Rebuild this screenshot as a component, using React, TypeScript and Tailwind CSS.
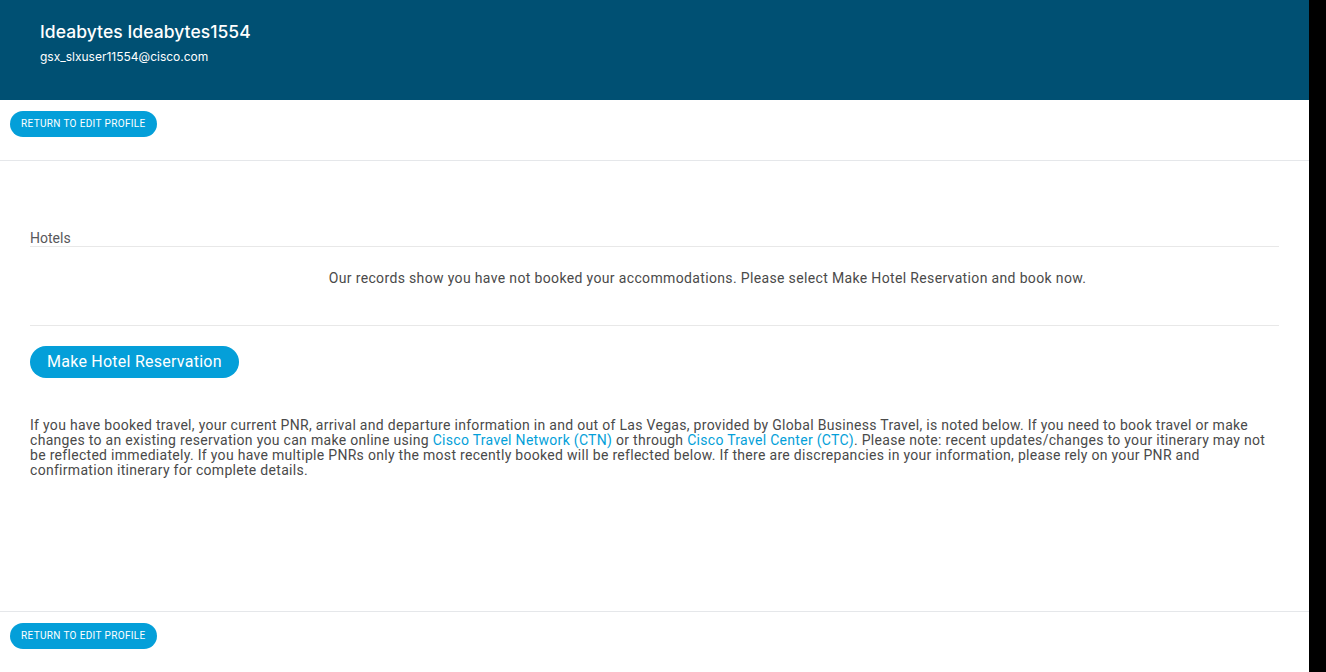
export default function App() {
  return (
    <div className="flex w-[1326px] h-[672px] overflow-hidden bg-black" style={{ fontFamily: "Roboto, 'Liberation Sans', sans-serif" }}>
      <div className="w-[1309px] h-full bg-white flex flex-col">
        <header className="h-[100px] bg-[#005073] pl-10 pt-[21px] text-white shrink-0" style={{ fontFamily: "Inter, sans-serif" }}>
          <div className="text-[17.5px] font-medium leading-[22px] tracking-[0.05px]">Ideabytes Ideabytes1554</div>
          <div className="text-[12px] leading-[14px] mt-[7px]">gsx_slxuser11554@cisco.com</div>
        </header>
        <div className="h-[61px] border-b border-[#e5e7ea] pl-[10px] pt-[10px] shrink-0">
          <button className="h-[26px] px-[11px] rounded-full bg-[#049fd9] text-white text-[10px] tracking-[0.35px] uppercase leading-none">Return to Edit Profile</button>
        </div>
        <main className="flex-1 px-[30px] pt-[69px]">
          <div className="text-[14px] text-[#58585b] leading-[16px] border-b border-[#e8e8e8] w-[1249px]">Hotels</div>
          <div className="w-[1249px] h-[79px] border-b border-[#e8e8e8] flex justify-center pt-[23px] text-[14px] tracking-[0.35px] text-[#4a4a4a] leading-[16px]">
            <span className="ml-[106px] whitespace-nowrap">Our records show you have not booked your accommodations. Please select Make Hotel Reservation and book now.</span>
          </div>
          <button className="mt-[20px] h-[32px] px-[17px] rounded-full bg-[#049fd9] text-white text-[16px] tracking-[0.25px] leading-none">Make Hotel Reservation</button>
          <p className="mt-[40px] w-[1249px] text-[14px] tracking-[0.3px] leading-[15px] text-[#4a4a4a]">
            If you have booked travel, your current PNR, arrival and departure information in and out of Las Vegas, provided by Global Business Travel, is noted below. If you need to book travel or make changes to an existing reservation you can make online using <span className="text-[#049fd9]">Cisco Travel Network (CTN)</span> or through <span className="text-[#049fd9]">Cisco Travel Center (CTC)</span>. Please note: recent updates/changes to your itinerary may not be reflected immediately. If you have multiple PNRs only the most recently booked will be reflected below. If there are discrepancies in your information, please rely on your PNR and confirmation itinerary for complete details.
          </p>
        </main>
        <div className="h-[61px] border-t border-[#e5e7ea] pl-[10px] pt-[10px] shrink-0">
          <button className="h-[26px] px-[11px] rounded-full bg-[#049fd9] text-white text-[10px] tracking-[0.35px] uppercase leading-none">Return to Edit Profile</button>
        </div>
      </div>
      <div className="w-[17px] h-full bg-black" />
    </div>
  );
}
